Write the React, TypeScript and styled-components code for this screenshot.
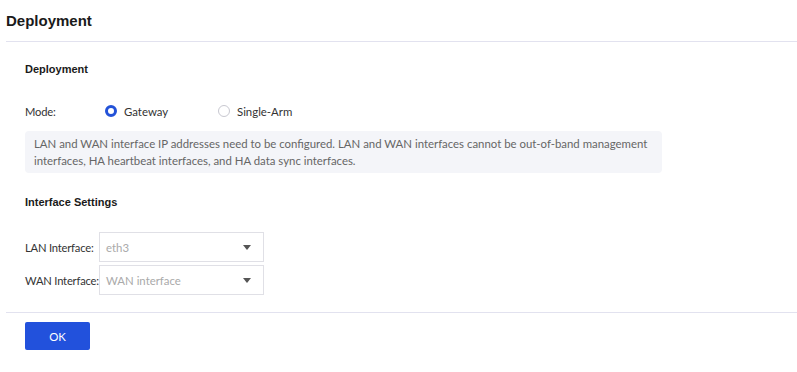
import styled, {createGlobalStyle} from "styled-components";

const GlobalStyle = createGlobalStyle`
  body {
    margin: 0;
    background: #fff;
    font-family: Lato, "Noto Sans", sans-serif;
    color: #333;
  }
`

const Page = styled.div`
  padding-left: 6px;
`

const Header = styled.div`
  display: flex;
  align-items: center;
  height: 42px;
  border-bottom: 1px solid #e2e2ef;
  font-family: "Liberation Sans", Arial, sans-serif;
  font-size: 15px;
  font-weight: bold;
  color: #1a1a1a;
  box-sizing: border-box;
`

const Body = styled.div`
  padding: 0 0 0 19px;
  display: flex;
  flex-direction: column;
`

const SectionTitle = styled.div<{ $top: number }>`
  margin-top: ${p => p.$top}px;
  font-family: "Liberation Sans", Arial, sans-serif;
  font-size: 11px;
  font-weight: bold;
  color: #1a1a1a;
  height: 14px;
  line-height: 14px;
`

const ModeRow = styled.div`
  display: flex;
  align-items: center;
  margin-top: 27px;
  height: 16px;
`

const Label = styled.div<{ $width: number }>`
  flex: 0 0 ${p => p.$width}px;
  min-width: 0;
  white-space: nowrap;
  font-size: 11.2px;
  letter-spacing: -0.2px;
  color: #333;
`

const RadioOption = styled.label`
  display: flex;
  align-items: center;
  gap: 7px;
  width: 113px;
  font-size: 11.4px;
  color: #333;
  cursor: pointer;
`

const RadioCircle = styled.span<{ $checked?: boolean }>`
  width: 12px;
  height: 12px;
  border-radius: 50%;
  box-sizing: border-box;
  border: ${p => p.$checked ? "3.5px solid #2352d8" : "1px solid #c8c8d0"};
  background: #fff;
`

const InfoBox = styled.div`
  margin-top: 12px;
  width: 637px;
  box-sizing: border-box;
  padding: 4px 9px 4px;
  background: #f4f5f9;
  border-radius: 4px;
  font-size: 11.4px;
  line-height: 17px;
  color: #666;
`

const FieldRow = styled.div<{ $top: number }>`
  display: flex;
  align-items: center;
  margin-top: ${p => p.$top}px;
`

const Select = styled.div`
  position: relative;
  width: 165px;
  height: 30px;
  box-sizing: border-box;
  border: 1px solid #e0e0e6;
  display: flex;
  align-items: center;
  padding-left: 6px;
  font-size: 11.4px;
  color: #aaa;
`

const Caret = styled.span`
  position: absolute;
  right: 12px;
  top: 12px;
  width: 0;
  height: 0;
  border-left: 4px solid transparent;
  border-right: 4px solid transparent;
  border-top: 5px solid #555;
`

const Footer = styled.div`
  margin-top: 17px;
  border-top: 1px solid #e2e2ef;
  padding: 9px 0 0 19px;
`

const OkButton = styled.button`
  width: 65px;
  height: 28px;
  border: none;
  border-radius: 2px;
  background: #2251dc;
  color: #fff;
  font-family: Lato, sans-serif;
  font-size: 11.4px;
  cursor: pointer;
`

export default function App() {
    return (
        <Page>
            <GlobalStyle/>
            <Header>Deployment</Header>
            <Body>
                <SectionTitle $top={20}>Deployment</SectionTitle>
                <ModeRow>
                    <Label $width={80}>Mode:</Label>
                    <RadioOption><RadioCircle $checked/>Gateway</RadioOption>
                    <RadioOption><RadioCircle/>Single-Arm</RadioOption>
                </ModeRow>
                <InfoBox>
                    LAN and WAN interface IP addresses need to be configured. LAN and WAN interfaces cannot be out-of-band management interfaces, HA heartbeat interfaces, and HA data sync interfaces.
                </InfoBox>
                <SectionTitle $top={22}>Interface Settings</SectionTitle>
                <FieldRow $top={23}>
                    <Label $width={74}>LAN Interface:</Label>
                    <Select>eth3<Caret/></Select>
                </FieldRow>
                <FieldRow $top={3}>
                    <Label $width={74}>WAN Interface:</Label>
                    <Select>WAN interface<Caret/></Select>
                </FieldRow>
            </Body>
            <Footer>
                <OkButton>OK</OkButton>
            </Footer>
        </Page>
    )
}
